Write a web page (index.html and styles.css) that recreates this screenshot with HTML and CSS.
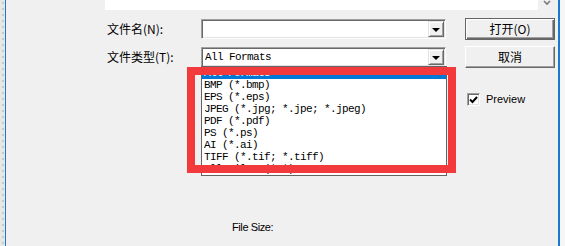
FILE: index.html
```html
<!DOCTYPE html>
<html>
<head>
<meta charset="utf-8">
<link rel="stylesheet" href="styles.css">
</head>
<body>
<div class="window">
  <div class="gutter"></div>
  <div class="edge"></div>
  <div class="main">
    <div class="topbar">
      <div class="preview-area"></div>
      <svg class="chevron" width="8" height="6" viewBox="0 0 8 6"><path d="M1 1 L4 4 L7 1" fill="none" stroke="#7a7a7a" stroke-width="1.6"/></svg>
    </div>
    <div class="form">
      <div class="lbl">文件名(N):</div>
      <div class="combo"><span class="val"></span><span class="drop"><i></i></span></div>
      <div class="btn default">打开(O)</div>
      <div class="lbl">文件类型(T):</div>
      <div class="combo open"><span class="val">All Formats</span><span class="drop"><i></i></span>
        <ul class="list">
          <li class="sel">All Formats</li>
          <li>BMP (*.bmp)</li>
          <li>EPS (*.eps)</li>
          <li>JPEG (*.jpg; *.jpe; *.jpeg)</li>
          <li>PDF (*.pdf)</li>
          <li>PS (*.ps)</li>
          <li>AI (*.ai)</li>
          <li>TIFF (*.tif; *.tiff)</li>
          <li>All Files (*.*)</li>
        </ul>
      </div>
      <div class="btn">取消</div>
      <div class="check-cell"><span class="box"><svg width="9" height="8" viewBox="0 0 9 8"><path d="M1 3.5 L3.5 6 L8 1" fill="none" stroke="#000" stroke-width="2"/></svg></span><span class="ctext">Preview</span></div>
    </div>
    <div class="filesize">File Size:</div>
  </div>
  <div class="edge right"></div>
  <div class="gutter-r"></div>
  <div class="callout"></div>
</div>
</body>
</html>
```
FILE: styles.css
```css
html, body {
  margin: 0;
  padding: 0;
}
body {
  width: 565px;
  height: 246px;
  overflow: hidden;
  background: #f0f0f0;
}
.window {
  position: relative;
  display: flex;
  width: 565px;
  height: 246px;
}
.gutter {
  width: 5px;
  background-color: #e6e6e6;
  background-image: radial-gradient(circle at 3px 3px, #c8c8c8 0.8px, transparent 1px);
  background-size: 5px 6px;
}
.edge {
  width: 1px;
  background: #1a78d2;
}
.edge.right {
  width: 2px;
}
.gutter-r {
  width: 5px;
  background: #f6f6f6;
}
.main {
  flex: 1;
  display: flex;
  flex-direction: column;
}
.topbar {
  display: flex;
  height: 10px;
  margin-left: 99px;
}
.preview-area {
  width: 433px;
  height: 10px;
  background: #fff;
}
.chevron {
  margin-left: 5px;
  margin-top: 0;
}
.form {
  display: grid;
  grid-template-columns: 94px 245px 90px;
  grid-template-rows: 22px 22px auto;
  column-gap: 0;
  row-gap: 6px;
  margin-top: 8px;
  margin-left: 101px;
}
.form > .btn {
  margin-left: 19px;
  width: 90px;
}
.lbl {
  font-family: "Noto Sans CJK SC", sans-serif;
  font-size: 12px;
  line-height: 22px;
  color: #000;
  white-space: nowrap;
}
.combo {
  position: relative;
  align-self: center;
  height: 20px;
  box-sizing: border-box;
  background: #fff;
  border: 1px solid;
  border-color: #a0a0a0 #ffffff #ffffff #a0a0a0;
  box-shadow: inset 1px 1px 0 #696969, inset -1px -1px 0 #e3e3e3;
  display: flex;
  align-items: center;
}
.val {
  flex: 1;
  padding-left: 3px;
  font-family: "Liberation Mono", monospace;
  font-size: 11px;
  letter-spacing: -0.6px;
  line-height: 16px;
  color: #000;
}
.drop {
  width: 16px;
  height: 16px;
  margin-right: 1px;
  box-sizing: border-box;
  background: #f0f0f0;
  border: 1px solid;
  border-color: #e3e3e3 #696969 #696969 #e3e3e3;
  box-shadow: inset 1px 1px 0 #fff, inset -1px -1px 0 #a0a0a0;
  display: flex;
  align-items: center;
  justify-content: center;
}
.drop i {
  width: 0;
  height: 0;
  border-left: 4px solid transparent;
  border-right: 4px solid transparent;
  border-top: 4px solid #000;
  margin-top: 1px;
}
.btn {
  height: 22px;
  box-sizing: border-box;
  background: #f0f0f0;
  border: 1px solid;
  border-color: #ffffff #696969 #696969 #ffffff;
  box-shadow: inset -1px -1px 0 #a0a0a0;
  font-family: "Noto Sans CJK SC", sans-serif;
  font-size: 12px;
  line-height: 20px;
  text-align: center;
  color: #000;
}
.btn.default {
  border-color: #646464;
  box-shadow: inset 1px 1px 0 #fff, inset -1px -1px 0 #696969, inset -2px -2px 0 #a0a0a0;
}
.list {
  position: absolute;
  left: -1px;
  top: 18px;
  width: 246px;
  margin: 0;
  padding: 0;
  list-style: none;
  box-sizing: border-box;
  background: #fff;
  border: 1px solid #646464;
  z-index: 2;
}
.list li {
  height: 12px;
  line-height: 12px;
  padding-left: 2px;
  font-family: "Liberation Mono", monospace;
  font-size: 11px;
  letter-spacing: -0.6px;
  color: #000;
  white-space: nowrap;
}
.list li.sel {
  background: #0078d7;
  color: #fff;
}
.check-cell {
  grid-column: 3;
  margin-left: 21px;
  margin-top: 19px;
  height: 13px;
  display: flex;
  align-items: center;
}
.box {
  width: 13px;
  height: 13px;
  box-sizing: border-box;
  background: #fff;
  border: 1px solid;
  border-color: #a0a0a0 #ffffff #ffffff #a0a0a0;
  box-shadow: inset 1px 1px 0 #696969, inset -1px -1px 0 #e3e3e3;
  display: flex;
  align-items: center;
  justify-content: center;
}
.ctext {
  margin-left: 6px;
  font-family: "Liberation Sans", Arial, sans-serif;
  font-size: 11px;
  line-height: 13px;
  color: #000;
}
.filesize {
  margin-top: 114px;
  margin-left: 226px;
  font-family: "Liberation Sans", Arial, sans-serif;
  font-size: 11px;
  letter-spacing: -0.4px;
  line-height: 14px;
  color: #000;
}
.callout {
  position: absolute;
  left: 187px;
  top: 67px;
  width: 269px;
  height: 106px;
  box-sizing: border-box;
  border: 8px solid #f23a3d;
  z-index: 5;
}
```
